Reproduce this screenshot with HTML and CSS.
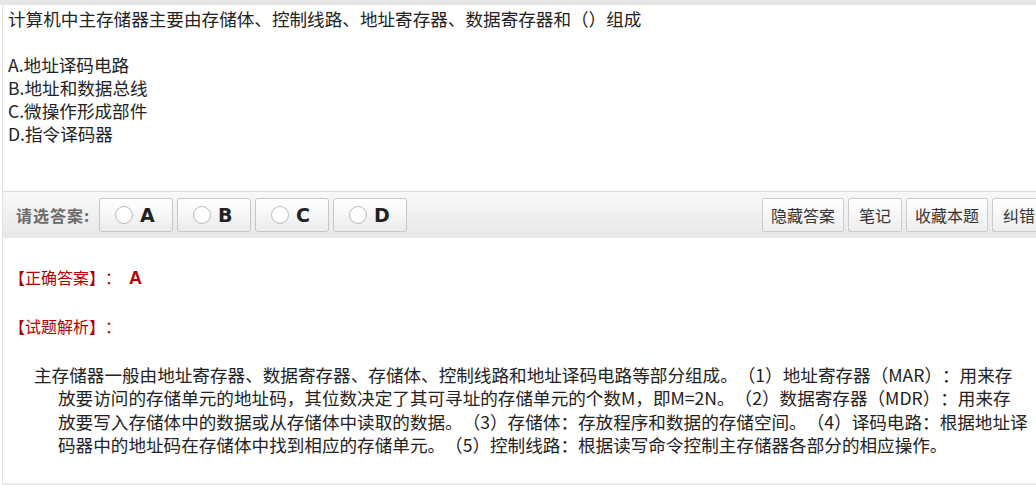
FILE: index.html
```html
<!DOCTYPE html>
<html lang="zh-CN">
  <head>
    <meta charset="UTF-8" />
    <meta name="viewport" content="width=device-width, initial-scale=1.0" />
    <title>试题</title>
    <link rel="stylesheet" href="styles.css">
  </head>
  <body>
    <div class="top-strip"></div>
    <div class="box">
      <div class="question">
        <p>计算机中主存储器主要由存储体、控制线路、地址寄存器、数据寄存器和（）组成</p>
        <p class="blank"></p>
        <p>A.地址译码电路</p>
        <p>B.地址和数据总线</p>
        <p>C.微操作形成部件</p>
        <p>D.指令译码器</p>
      </div>

      <div class="answer-bar">
        <span class="pick-label">请选答案:</span>
        <div class="choices">
          <button class="choice"><span class="radio"></span><span class="letter">A</span></button>
          <button class="choice"><span class="radio"></span><span class="letter">B</span></button>
          <button class="choice"><span class="radio"></span><span class="letter">C</span></button>
          <button class="choice"><span class="radio"></span><span class="letter">D</span></button>
        </div>
        <div class="tools">
          <button class="tool">隐藏答案</button>
          <button class="tool">笔记</button>
          <button class="tool">收藏本题</button>
          <button class="tool">纠错</button>
        </div>
      </div>

      <div class="analysis">
        <p class="red-label">【正确答案】：<span class="right-answer">A</span></p>
        <p class="red-label">【试题解析】：</p>
        <p class="explain">主存储器一般由地址寄存器、数据寄存器、存储体、控制线路和地址译码电路等部分组成。（1）地址寄存器（MAR）：用来存放要访问的存储单元的地址码，其位数决定了其可寻址的存储单元的个数M，即M=2N。（2）数据寄存器（MDR）：用来存放要写入存储体中的数据或从存储体中读取的数据。（3）存储体：存放程序和数据的存储空间。（4）译码电路：根据地址译码器中的地址码在存储体中找到相应的存储单元。（5）控制线路：根据读写命令控制主存储器各部分的相应操作。</p>
      </div>
    </div>
  </body>
</html>
```

FILE: styles.css
```css
body {
  margin: 0;
  overflow: hidden;
  background-color: white;
  color: #222;
  font-family: "Noto Sans CJK SC", "Microsoft YaHei", sans-serif;
  text-spacing-trim: space-all;
}
p {
  margin: 0;
}
.top-strip {
  height: 5px;
  background-color: #e6e6e6;
}
.box {
  box-sizing: border-box;
  width: 1049px;
  height: 480px;
  margin-left: 2px;
  border-left: 1px solid #e2e2e2;
  border-bottom: 2px solid #e8e8e8;
}
.question {
  box-sizing: border-box;
  height: 186px;
  padding: 2px 5px 0;
  font-size: 17.6px;
  line-height: 23px;
}
.blank {
  height: 23px;
}
.answer-bar {
  display: flex;
  align-items: center;
  height: 46px;
  padding: 0 5px 0 13px;
  border-top: 1px solid #dcdcdc;
  background: linear-gradient(#f8f8f8, #e7e7e7);
}
.pick-label {
  width: 83px;
  color: #6a6a6a;
  font-size: 16px;
  font-weight: bold;
  letter-spacing: 1px;
}
.choices {
  display: flex;
  gap: 4px;
}
.choice {
  display: flex;
  align-items: center;
  box-sizing: border-box;
  width: 74px;
  height: 34px;
  padding: 0 0 0 15px;
  border: 1px solid #c6c6c6;
  border-radius: 3px;
  background: linear-gradient(#ffffff, #ececec);
  font-family: inherit;
}
.radio {
  box-sizing: border-box;
  width: 18px;
  height: 18px;
  border: 1px solid #bdbdbd;
  border-radius: 50%;
  background: radial-gradient(circle at 50% 40%, #ffffff 55%, #ececec);
}
.letter {
  margin-left: 7px;
  color: #222;
  font-family: "DejaVu Sans", sans-serif;
  font-size: 19px;
  font-weight: bold;
}
.tools {
  display: flex;
  gap: 4px;
  margin-left: auto;
}
.tool {
  box-sizing: border-box;
  min-width: 54px;
  height: 34px;
  padding: 0 8px;
  border: 1px solid #cccccc;
  border-radius: 2px;
  background: linear-gradient(#ffffff, #eeeeee);
  color: #333;
  font-family: inherit;
  font-size: 16px;
}
.analysis {
  padding: 28px 23px 0 6px;
}
.red-label {
  margin-bottom: 25px;
  color: #b40000;
  font-size: 16px;
  line-height: 23px;
}
.right-answer {
  margin-left: 8px;
  font-family: "Liberation Sans", sans-serif;
  font-size: 18px;
  font-weight: bold;
}
.explain {
  padding-left: 49px;
  text-indent: -24px;
  color: #222;
  font-size: 17.6px;
  line-height: 23.3px;
}
```
